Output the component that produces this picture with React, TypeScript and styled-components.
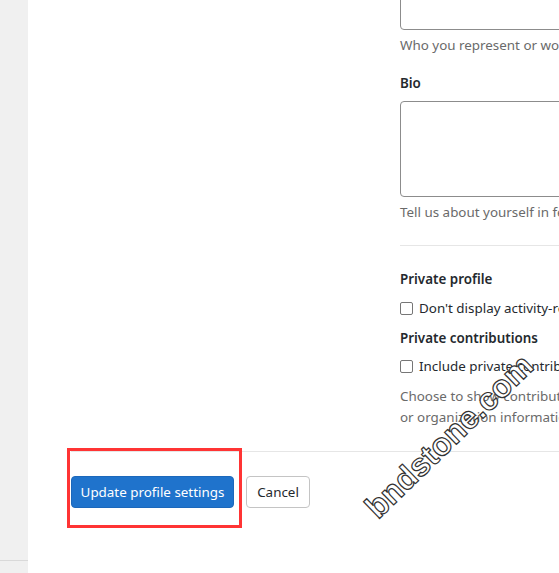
import React from 'react';
import styled, { createGlobalStyle } from 'styled-components';

// -- global --
const GlobalStyle = createGlobalStyle`
  html, body {
    margin: 0;
    padding: 0;
    background: #ffffff;
  }
  body {
    font-family: "Noto Sans", "Open Sans", sans-serif;
    font-size: 13.4px;
    color: #24292e;
    overflow: hidden;
  }
`;

// -- main component --
const App: React.FC = () => {
  return (
    <>
      <GlobalStyle />
      <PageWrapper>
        <SideRail>
          <SideRailTop />
        </SideRail>
        <MainArea>
          <ContentGrid>
            <NavColumn />
            <FormColumn>
              <TextInput />
              <HelpText>Who you represent or work for</HelpText>
              <FieldLabel spaced>Bio</FieldLabel>
              <TextArea />
              <HelpText>Tell us about yourself in fewer than 160 characters</HelpText>
              <Divider />
              <FieldLabel>Private profile</FieldLabel>
              <CheckRow>
                <CheckBox />
                <span>Don't display activity-related information on your profile</span>
              </CheckRow>
              <FieldLabel>Private contributions</FieldLabel>
              <CheckRow>
                <CheckBox />
                <span>Include private contributions on my profile</span>
              </CheckRow>
              <HelpText tight>
                Choose to show contributions from private repositories
                <br />
                or organization information
              </HelpText>
            </FormColumn>
          </ContentGrid>
          <Footer>
            <HighlightBox>
              <PrimaryButton>Update profile settings</PrimaryButton>
            </HighlightBox>
            <SecondaryButton>Cancel</SecondaryButton>
          </Footer>
        </MainArea>
        <Watermark>bndstone.com</Watermark>
      </PageWrapper>
    </>
  );
};

// -- styled components --

const PageWrapper = styled.div`
  position: relative;
  display: flex;
  width: 559px;
  height: 573px;
  overflow: hidden;
`;

const SideRail = styled.div`
  width: 28px;
  flex: none;
  background: #f0f0f0;
`;

const SideRailTop = styled.div`
  height: 560px;
  border-bottom: 1px solid #d9d9d9;
`;

const MainArea = styled.div`
  flex: 1;
  display: flex;
  flex-direction: column;
  min-width: 0;
`;

const ContentGrid = styled.div`
  display: grid;
  grid-template-columns: 372px 1fr;
`;

const NavColumn = styled.div``;

const FormColumn = styled.div`
  display: flex;
  flex-direction: column;
  width: 420px;
  margin-top: -4px;
`;

const TextInput = styled.div`
  height: 34px;
  border: 1px solid #8c8c8c;
  border-radius: 4px;
  box-sizing: border-box;
`;

const HelpText = styled.div<{ tight?: boolean }>`
  color: #6a6a6a;
  line-height: 21px;
  margin-top: ${(p) => (p.tight ? '-1px' : '5px')};
  white-space: nowrap;
`;

const FieldLabel = styled.div<{ spaced?: boolean }>`
  font-weight: 600;
  line-height: 20px;
  margin-top: ${(p) => (p.spaced ? '17px' : '0')};
  margin-bottom: 8px;
`;

const TextArea = styled.div`
  height: 96px;
  border: 1px solid #8c8c8c;
  border-radius: 4px;
  box-sizing: border-box;
`;

const Divider = styled.div`
  height: 1px;
  background: #e6e6e6;
  margin: 22px 0 23px;
`;

const CheckRow = styled.label`
  display: flex;
  align-items: center;
  gap: 6px;
  line-height: 20px;
  margin-bottom: 11px;
  white-space: nowrap;
  &:nth-of-type(1) {
    margin-top: 1px;
    margin-bottom: 10px;
  }
`;

const CheckBox = styled.span`
  width: 13px;
  height: 13px;
  border: 1px solid #767676;
  border-radius: 2px;
  box-sizing: border-box;
  flex: none;
`;

const Footer = styled.div`
  display: flex;
  align-items: center;
  gap: 12px;
  margin: 23px 0 0 43px;
  padding-top: 24px;
  border-top: 1px solid #e6e6e6;
`;

const HighlightBox = styled.div`
  position: relative;
  &::before {
    content: '';
    position: absolute;
    left: -4px;
    top: -28px;
    right: -8px;
    bottom: -20px;
    border: 3px solid #ff3434;
    pointer-events: none;
  }
`;

const ButtonBase = styled.button`
  height: 32px;
  box-sizing: border-box;
  border-radius: 4px;
  font-family: inherit;
  font-size: 13.4px;
  padding: 0;
  white-space: nowrap;
  cursor: pointer;
`;

const PrimaryButton = styled(ButtonBase)`
  display: block;
  width: 163px;
  background: #1f73cc;
  border: 1px solid #1c68bb;
  color: #ffffff;
`;

const SecondaryButton = styled(ButtonBase)`
  width: 64px;
  background: #ffffff;
  border: 1px solid #c4c4c4;
  color: #24292e;
`;

const Watermark = styled.div`
  position: absolute;
  left: 340px;
  top: 418px;
  font-family: "Liberation Sans", Arial, sans-serif;
  font-weight: 700;
  font-size: 32px;
  color: #ffffff;
  -webkit-text-stroke: 1.2px #333333;
  transform: rotate(-44deg);
  transform-origin: center;
  white-space: nowrap;
  pointer-events: none;
`;

// -- finally export part --

export default App;
